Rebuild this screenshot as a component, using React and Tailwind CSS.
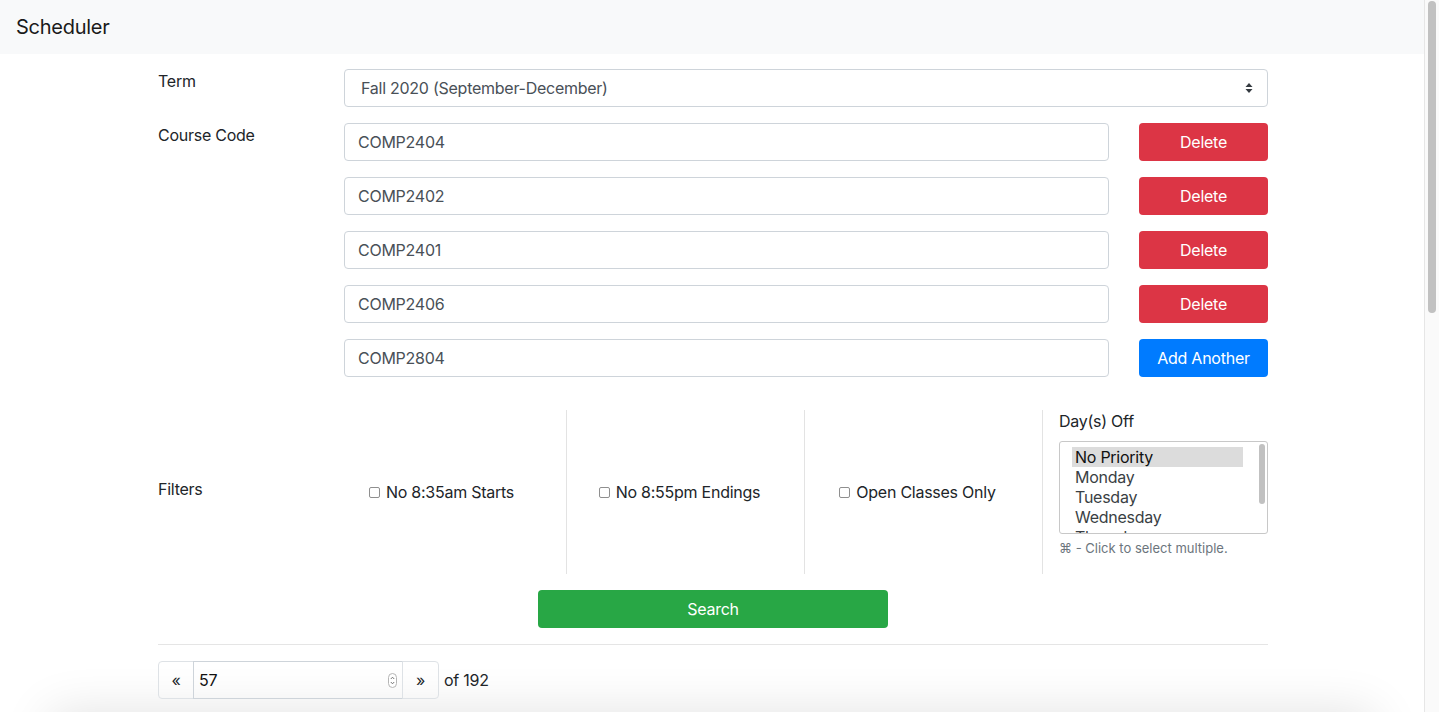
import { useState } from "react";

const courses = ["COMP2404", "COMP2402", "COMP2401", "COMP2406", "COMP2804"];
const days = ["No Priority", "Monday", "Tuesday", "Wednesday", "Thursday", "Friday"];
const filters = ["No 8:35am Starts", "No 8:55pm Endings", "Open Classes Only"];

function SelectArrows() {
  return (
    <svg width="8" height="12" viewBox="0 0 8 12" className="shrink-0">
      <path d="M4 1 L7.5 5 H0.5 Z" fill="#343a40" />
      <path d="M4 11 L7.5 7 H0.5 Z" fill="#343a40" />
    </svg>
  );
}

function Spinner() {
  return (
    <svg width="9" height="15" viewBox="0 0 9 15" className="shrink-0">
      <rect x="0.5" y="0.5" width="8" height="14" rx="4" fill="#fff" stroke="#b5b5b5" />
      <path d="M2.8 6 L4.5 4.2 L6.2 6" fill="none" stroke="#666" strokeWidth="0.9" />
      <path d="M2.8 9 L4.5 10.8 L6.2 9" fill="none" stroke="#666" strokeWidth="0.9" />
    </svg>
  );
}

function Checkbox({ label }) {
  return (
    <label className="flex items-center gap-[6px] text-base text-[#212529]">
      <span className="w-[11px] h-[11px] rounded-[2px] border border-[#8f8f8f] bg-white" />
      {label}
    </label>
  );
}

export default function App() {
  const [selected] = useState(0);

  return (
    <div
      className="flex h-[712px] overflow-hidden bg-white tracking-[-0.016em]"
      style={{ fontFamily: "Inter, 'Liberation Sans', sans-serif" }}
    >
      <div className="flex-1 min-w-0 overflow-hidden">
        <nav className="h-[54px] bg-[#f8f9fa] flex items-center px-4">
          <span className="text-[20px] text-[#1a1a1a]">Scheduler</span>
        </nav>

        <div className="w-[1110px] ml-[158px] pt-[15px] text-[#212529]">
          <div className="flex">
            <div className="w-[186px] leading-6">Term</div>
            <div className="w-[924px] h-[38px] border border-[#ced4da] rounded flex items-center justify-between pl-4 pr-[14px] text-[#495057]">
              <span>Fall 2020 (September-December)</span>
              <SelectArrows />
            </div>
          </div>

          <div className="flex mt-4">
            <div className="w-[186px] leading-6">Course Code</div>
            <div className="w-[924px] flex flex-col gap-4">
              {courses.map((c, i) => (
                <div key={c} className="flex gap-[30px]">
                  <div className="flex-1 h-[38px] border border-[#ced4da] rounded flex items-center px-[13px] text-[#495057]">
                    {c}
                  </div>
                  {i < courses.length - 1 ? (
                    <button className="w-[129px] h-[38px] rounded bg-[#dc3545] text-white">
                      Delete
                    </button>
                  ) : (
                    <button className="w-[129px] h-[38px] rounded bg-[#007bff] text-white">
                      Add Another
                    </button>
                  )}
                </div>
              ))}
            </div>
          </div>

          <div className="flex mt-[33px] h-[164px]">
            <div className="w-[171px] self-center mb-[7px] leading-6">Filters</div>
            {filters.map((f) => (
              <div
                key={f}
                className="w-[238px] border-r border-[#e3e3e3] flex items-center justify-center pr-3"
              >
                <Checkbox label={f} />
              </div>
            ))}
            <div className="flex-1 pl-4">
              <div className="leading-6 -mt-px">Day(s) Off</div>
              <div className="mt-2 h-[93px] border border-[#c8c8c8] rounded-[3px] flex overflow-hidden">
                <div className="flex-1 pl-3 pt-[5px] pr-[13px] leading-5">
                  {days.map((d, i) => (
                    <div
                      key={d}
                      className={
                        i === selected
                          ? "bg-[#dcdcdc] text-[#111] pl-[3px]"
                          : "text-[#3a3f44] pl-[3px]"
                      }
                    >
                      {d}
                    </div>
                  ))}
                </div>
                <div className="w-[11px] flex justify-center pt-[2px]">
                  <div className="w-[6px] h-[60px] rounded-full bg-[#c1c1c1]" />
                </div>
              </div>
              <div className="mt-[5px] text-[13px] tracking-normal text-[#6c757d]">⌘ - Click to select multiple.</div>
            </div>
          </div>

          <div className="flex justify-center mt-4">
            <button className="w-[350px] h-[38px] rounded bg-[#28a745] text-white">Search</button>
          </div>

          <div className="mt-[16px] border-t border-[#e5e5e5]" />

          <div className="flex items-center mt-4">
            <div className="flex h-[38px]">
              <button className="w-[36px] border border-[#dee2e6] rounded-l text-[#212529]">«</button>
              <div className="w-[210px] border border-[#ced4da] -ml-px flex items-center justify-between pl-[5px] pr-[5px]">
                <span className="text-[#111]">57</span>
                <Spinner />
              </div>
              <button className="w-[37px] border border-[#dee2e6] -ml-px rounded-r text-[#212529]">»</button>
            </div>
            <span className="ml-[5px]">of 192</span>
          </div>
        </div>

        <div className="mt-[14px] mx-[50px] h-[200px] rounded bg-white shadow-[0_0_50px_rgba(0,0,0,0.12)]" />
      </div>

      <div className="w-[15px] shrink-0 bg-[#fafafa] border-l border-[#e6e6e6] flex justify-center pt-px">
        <div className="w-2 h-[312px] rounded-full bg-[#c1c1c1]" />
      </div>
    </div>
  );
}
